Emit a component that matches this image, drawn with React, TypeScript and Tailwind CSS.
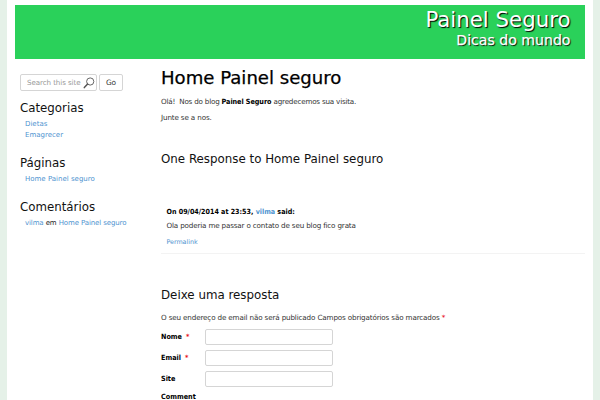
import React from 'react';

const FormRow = ({ label, required = false }: { label: string; required?: boolean }) => (
  <div className="flex h-[21px] items-center">
    <label className="w-[43.5px] font-['DejaVu_Sans_Condensed','DejaVu_Sans',sans-serif] text-[7.2px] font-bold tracking-normal text-black">
      {label}
      {required && <span className="ml-[4px] text-red-600">*</span>}
    </label>
    <input className="h-[16px] w-[128px] rounded-[2px] border border-[#d5d5d5] bg-white px-1 outline-none" />
  </div>
);

const WidgetTitle = ({ children }: { children: React.ReactNode }) => (
  <h3 className="text-[11.8px] leading-4 text-[#111]">{children}</h3>
);

const Link = ({ children }: { children: React.ReactNode }) => (
  <a href="#" className="text-[#4f94d0]">{children}</a>
);

const Sidebar = () => (
  <aside className="w-[141px] shrink-0 pl-[5px] pt-[15px] text-[7px] leading-[11px]">
    <form className="flex gap-[2px]">
      <div className="flex h-[17px] w-[77px] items-center rounded-[2px] border border-[#d5d5d5] pl-[6px] pr-[1px]">
        <span className="flex-1 whitespace-nowrap text-[7.1px] tracking-[-0.07px] text-[#999]">Search this site</span>
        <svg className="h-[12px] w-[12px]" viewBox="0 0 12 12" fill="none" stroke="#555">
          <circle cx="7.2" cy="4.5" r="3.6" strokeWidth="0.9" />
          <path d="M4.6 7.1 1.3 10.6" strokeWidth="1.5" strokeLinecap="round" />
        </svg>
      </div>
      <button type="button" className="h-[17px] w-[24px] rounded-[2px] border border-[#d5d5d5] text-[7.4px] text-[#333]">Go</button>
    </form>

    <div className="pt-[9px]">
      <WidgetTitle>Categorias</WidgetTitle>
      <ul className="pl-[5px] pt-[3px]">
        <li><Link>Dietas</Link></li>
        <li><Link>Emagrecer</Link></li>
      </ul>
    </div>

    <div className="pt-[14px]">
      <WidgetTitle>Páginas</WidgetTitle>
      <ul className="pl-[5px] pt-[3px]">
        <li><Link>Home Painel seguro</Link></li>
      </ul>
    </div>

    <div className="pt-[14px]">
      <WidgetTitle>Comentários</WidgetTitle>
      <ul className="pl-[5px] pt-[3px] text-[#222]">
        <li className="tracking-[-0.12px]"><Link>vilma</Link> em <Link>Home Painel seguro</Link></li>
      </ul>
    </div>
  </aside>
);

const Content = () => (
  <main className="ml-[5px] min-w-0 flex-1 pt-[7px] text-[7.2px] leading-4 tracking-[-0.15px] text-[#333]">
    <h1 className="text-[18.1px] leading-6 tracking-normal text-black [-webkit-text-stroke:0.25px_black]">Home Painel seguro</h1>
    <p className="pt-[4px] tracking-[-0.21px]">
      Olá!&nbsp; Nos do blog <b className="font-['DejaVu_Sans_Condensed','DejaVu_Sans',sans-serif] tracking-[-0.05px] text-black">Painel Seguro</b> agredecemos sua visita.
    </p>
    <p>Junte se a nos.</p>

    <h2 className="pt-[25px] text-[11.85px] tracking-normal text-[#111]">One Response to Home Painel seguro</h2>
    <div className="mt-[37px] border-b border-[#f3f3f3] pb-[3px] pl-[5.5px]">
      <p className="font-['DejaVu_Sans_Condensed','DejaVu_Sans',sans-serif] text-[7.1px] font-bold tracking-normal text-black">
        On 09/04/2014 at 23:53, <Link>vilma</Link> said:
      </p>
      <p className="-mt-[2px] tracking-[-0.17px]">Ola poderia me passar o contato de seu blog fico grata</p>
      <p className="text-[6.4px] tracking-[-0.05px]"><Link>Permalink</Link></p>
    </div>

    <h2 className="pt-[33px] text-[11.85px] tracking-normal text-[#111]">Deixe uma resposta</h2>
    <p className="pt-[7px]">
      O seu endereço de email não será publicado Campos obrigatórios são marcados <span className="text-red-600">*</span>
    </p>
    <form>
      <FormRow label="Nome" required />
      <FormRow label="Email" required />
      <FormRow label="Site" />
      <label className="block font-['DejaVu_Sans_Condensed','DejaVu_Sans',sans-serif] text-[7.2px] font-bold tracking-normal text-black">Comment</label>
    </form>
  </main>
);

export default function App() {
  return (
    <div className="h-[400px] overflow-hidden bg-[#e5f1e8] px-[7px] font-['DejaVu_Sans',sans-serif]">
      <div className="h-full bg-white px-2 pt-[5px]">
        <header className="h-[54px] bg-[#2ad15a] pr-[14.5px] pt-[3px] text-right text-white [text-shadow:1px_1px_1px_#000]">
          <div className="text-[21.3px] leading-6">Painel Seguro</div>
          <div className="text-[14.1px] leading-4 [-webkit-text-stroke:0.25px_white]">Dicas do mundo</div>
        </header>
        <div className="flex">
          <Sidebar />
          <Content />
        </div>
      </div>
    </div>
  );
}
